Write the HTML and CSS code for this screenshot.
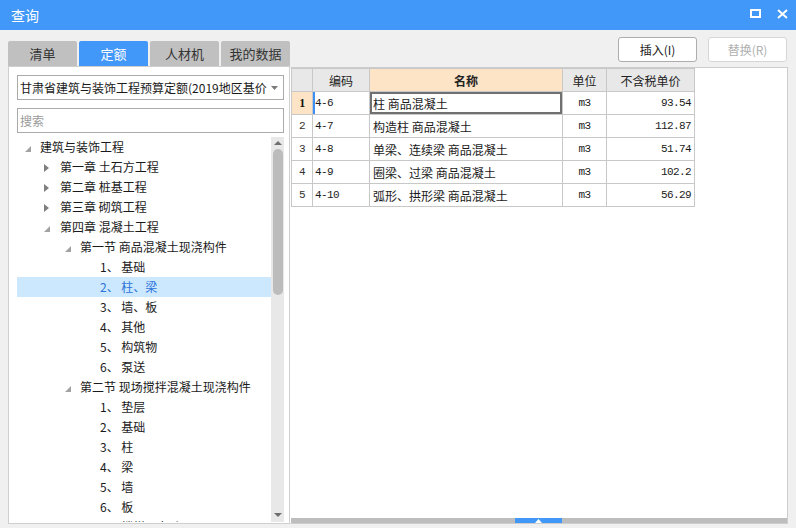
FILE: index.html
```html
<!DOCTYPE html>
<html lang="zh">
<head>
<meta charset="utf-8">
<title>查询</title>
<link rel="stylesheet" href="styles.css">
</head>
<body>
<div class="window">
  <header class="titlebar">
    <span class="title">查询</span>
    <div class="winbtns">
      <svg class="wb-max" width="12" height="10" viewBox="0 0 12 10"><rect x="1" y="1" width="9" height="7" fill="none" stroke="#fff" stroke-width="2"/></svg>
      <svg class="wb-close" width="11" height="10" viewBox="0 0 11 10"><path d="M1 1L10 9M10 1L1 9" stroke="#fff" stroke-width="2"/></svg>
    </div>
  </header>
  <div class="main">
    <section class="left">
      <nav class="tabs">
        <div class="tab">清单</div>
        <div class="tab active">定额</div>
        <div class="tab">人材机</div>
        <div class="tab">我的数据</div>
      </nav>
      <div class="lpanel">
        <div class="select">
          <span class="select-text">甘肃省建筑与装饰工程预算定额(2019地区基价)</span>
          <svg class="select-arrow" width="7" height="4" viewBox="0 0 7 4"><polygon points="0,0 7,0 3.5,4" fill="#7a7a7a"/></svg>
        </div>
        <div class="search">搜索</div>
        <div class="tree">
          <div class="tree-list">
            <div class="node l0"><span class="tg"><svg class="open" width="6" height="6" viewBox="0 0 6 6"><polygon points="6,0 6,6 0,6"/></svg></span><span>建筑与装饰工程</span></div>
            <div class="node l1"><span class="tg"><svg class="closed" width="5" height="8" viewBox="0 0 5 8"><polygon points="0,0 5,4 0,8"/></svg></span><span>第一章 土石方工程</span></div>
            <div class="node l1"><span class="tg"><svg class="closed" width="5" height="8" viewBox="0 0 5 8"><polygon points="0,0 5,4 0,8"/></svg></span><span>第二章 桩基工程</span></div>
            <div class="node l1"><span class="tg"><svg class="closed" width="5" height="8" viewBox="0 0 5 8"><polygon points="0,0 5,4 0,8"/></svg></span><span>第三章 砌筑工程</span></div>
            <div class="node l1"><span class="tg"><svg class="open" width="6" height="6" viewBox="0 0 6 6"><polygon points="6,0 6,6 0,6"/></svg></span><span>第四章 混凝土工程</span></div>
            <div class="node l2"><span class="tg"><svg class="open" width="6" height="6" viewBox="0 0 6 6"><polygon points="6,0 6,6 0,6"/></svg></span><span>第一节 商品混凝土现浇构件</span></div>
            <div class="node l3"><span class="tg"></span><span>1、 基础</span></div>
            <div class="node l3 selected"><span class="tg"></span><span>2、 柱、梁</span></div>
            <div class="node l3"><span class="tg"></span><span>3、 墙、板</span></div>
            <div class="node l3"><span class="tg"></span><span>4、 其他</span></div>
            <div class="node l3"><span class="tg"></span><span>5、 构筑物</span></div>
            <div class="node l3"><span class="tg"></span><span>6、 泵送</span></div>
            <div class="node l2"><span class="tg"><svg class="open" width="6" height="6" viewBox="0 0 6 6"><polygon points="6,0 6,6 0,6"/></svg></span><span>第二节 现场搅拌混凝土现浇构件</span></div>
            <div class="node l3"><span class="tg"></span><span>1、 垫层</span></div>
            <div class="node l3"><span class="tg"></span><span>2、 基础</span></div>
            <div class="node l3"><span class="tg"></span><span>3、 柱</span></div>
            <div class="node l3"><span class="tg"></span><span>4、 梁</span></div>
            <div class="node l3"><span class="tg"></span><span>5、 墙</span></div>
            <div class="node l3"><span class="tg"></span><span>6、 板</span></div>
            <div class="node l3"><span class="tg"></span><span>7、 楼梯、台阶</span></div>
          </div>
          <div class="vscroll">
            <div class="vs-btn"><svg width="8" height="4" viewBox="0 0 8 4"><polygon points="0,4 8,4 4,0" fill="#6e6e6e"/></svg></div>
            <div class="vs-thumb"></div>
            <div class="vs-fill"></div>
            <div class="vs-btn down"><svg width="8" height="4" viewBox="0 0 8 4"><polygon points="0,0 8,0 4,4" fill="#6e6e6e"/></svg></div>
          </div>
        </div>
      </div>
    </section>
    <section class="right">
      <div class="btnrow">
        <button class="btn">插入(I)</button>
        <button class="btn" disabled>替换(R)</button>
      </div>
      <div class="rpanel">
        <div class="grid-wrap">
          <table class="grid">
            <colgroup><col class="c-no"><col class="c-code"><col class="c-name"><col class="c-unit"><col class="c-price"></colgroup>
            <thead>
              <tr><th></th><th>编码</th><th class="hl">名称</th><th>单位</th><th>不含税单价</th></tr>
            </thead>
            <tbody>
              <tr class="cur"><td class="no">1</td><td class="code mark">4-6</td><td class="name focus">柱 商品混凝土</td><td class="unit">m3</td><td class="price">93.54</td></tr>
              <tr><td class="no">2</td><td class="code">4-7</td><td class="name">构造柱 商品混凝土</td><td class="unit">m3</td><td class="price">112.87</td></tr>
              <tr><td class="no">3</td><td class="code">4-8</td><td class="name">单梁、连续梁 商品混凝土</td><td class="unit">m3</td><td class="price">51.74</td></tr>
              <tr><td class="no">4</td><td class="code">4-9</td><td class="name">圈梁、过梁 商品混凝土</td><td class="unit">m3</td><td class="price">102.2</td></tr>
              <tr><td class="no">5</td><td class="code">4-10</td><td class="name">弧形、拱形梁 商品混凝土</td><td class="unit">m3</td><td class="price">56.29</td></tr>
            </tbody>
          </table>
        </div>
        <div class="hscroll"><div class="hs-thumb"><svg width="7" height="4" viewBox="0 0 7 4"><polygon points="0,4 7,4 3.5,0" fill="#fff"/></svg></div></div>
      </div>
    </section>
  </div>
</div>
</body>
</html>
```

FILE: styles.css
```css
* { box-sizing: border-box; }
html, body { margin: 0; padding: 0; }
body {
  width: 796px;
  height: 528px;
  overflow: hidden;
  background: #f0f0f0;
  font-family: "Noto Sans CJK SC", "Noto Sans", sans-serif;
  font-size: 12px;
  color: #1a1a1a;
}
.window { width: 796px; height: 528px; }

.titlebar {
  height: 30px;
  background: #4298f8;
  display: flex;
  align-items: center;
  justify-content: space-between;
  padding: 0 8px 0 11px;
}
.title { color: #fff; font-size: 14px; line-height: 30px; }
.winbtns { display: flex; align-items: center; gap: 15px; margin-top: -2px; }
.winbtns svg { display: block; }

.main { display: flex; padding: 0 8px; }

.left { width: 282px; padding-top: 11px; }
.tabs { display: flex; gap: 2px; height: 25px; }
.tab {
  width: 78px;
  height: 25px;
  background: #c0c0c0;
  color: #333;
  font-size: 13px;
  line-height: 25px;
  text-align: center;
  border-radius: 2px 2px 0 0;
}
.tab.active { background: #4298f8; color: #fff; }

.lpanel {
  height: 458px;
  background: #fff;
  border: 1px solid #cfcfcf;
  padding: 8px 5px 1px 8px;
  display: flex;
  flex-direction: column;
}
.select {
  height: 25px;
  border: 1px solid #ababab;
  display: flex;
  align-items: center;
  padding: 0 5px 0 2px;
  margin-bottom: 8px;
}
.select-text {
  flex: 1;
  overflow: hidden;
  white-space: nowrap;
  line-height: 23px;
  margin-right: 4px;
}
.select-arrow { display: block; flex: none; }
.search {
  height: 25px;
  border: 1px solid #ababab;
  color: #9a9a9a;
  line-height: 23px;
  padding-left: 2px;
  margin-bottom: 4px;
}
.tree { flex: 1; display: flex; overflow: hidden; }
.tree-list { flex: 1; overflow: hidden; }
.node {
  height: 20px;
  line-height: 20px;
  display: flex;
  white-space: nowrap;
}
.node.l0 { padding-left: 8px; }
.node.l1 { padding-left: 27px; }
.node.l2 { padding-left: 48px; }
.node.l3 { padding-left: 68px; }
.node.l1 .tg { width: 16px; }
.tg { width: 15px; flex: none; height: 20px; position: relative; }
.tg svg { display: block; }
.tg svg.open { fill: #a2a2a2; margin-top: 9px; }
.tg svg.closed { fill: #7f7f7f; margin-top: 7px; }
.node.selected { background: #cce8ff; color: #2b73d8; }

.vscroll {
  width: 13px;
  background: #e8e8e8;
  display: flex;
  flex-direction: column;
  align-items: center;
}
.vs-btn { height: 12px; display: flex; align-items: center; justify-content: center; width: 100%; }
.vs-btn svg { display: block; margin-top: -1px; }
.vs-btn.down { height: 14px; }
.vs-thumb {
  width: 10px;
  height: 146px;
  background: #bcbcbc;
  border-radius: 5px;
  margin-left: 1px;
}
.vs-fill { flex: 1; }

.right { width: 498px; padding-top: 7px; }
.btnrow {
  height: 25px;
  display: flex;
  justify-content: flex-end;
  gap: 11px;
  padding-right: 1px;
  margin-bottom: 5px;
}
.btn {
  width: 79px;
  height: 25px;
  background: #fff;
  border: 1px solid #adadad;
  border-radius: 3px;
  font-family: "Noto Sans CJK SC", "Noto Sans", sans-serif;
  font-size: 12px;
  color: #1a1a1a;
  padding: 0;
}
.btn:disabled { border-color: #d6d6d6; color: #b0b0b0; }

.rpanel {
  height: 457px;
  background: #fff;
  border: 1px solid #cdcdcd;
  border-left-color: #fff;
  display: flex;
  flex-direction: column;
}
.grid-wrap { flex: 1; overflow: hidden; }
.grid {
  border-collapse: collapse;
  table-layout: fixed;
  width: 403px;
}
.c-no { width: 21px; }
.c-code { width: 57px; }
.c-name { width: 193px; }
.c-unit { width: 44px; }
.c-price { width: 88px; }
.grid th, .grid td {
  border: 1px solid #c8c8c8;
  height: 23px;
  padding: 0;
  white-space: nowrap;
  overflow: hidden;
}
.grid tr { height: 23px; }
.grid th {
  background: #e8e8e8;
  font-weight: normal;
  text-align: center;
  color: #222;
}
.grid th.hl { background: #fde4c6; font-weight: bold; }
.grid td.no, .grid td.code, .grid td.unit, .grid td.price {
  font-family: "Liberation Mono", "DejaVu Sans Mono", monospace;
  font-size: 11px;
  letter-spacing: -0.6px;
}
.grid td.no { text-align: center; color: #333; }
.grid tr.cur td.no { background: #fde4c6; font-weight: bold; font-family: "Liberation Serif", serif; font-size: 12px; color: #111; }
.grid td.code { padding-left: 2px; }
.grid td.code.mark { box-shadow: inset 2px 0 0 #3d8ef5; }
.grid td.name { padding-left: 3px; }
.grid td.name.focus { box-shadow: inset 0 0 0 2px #707070; }
.grid td.unit { text-align: center; }
.grid td.price { text-align: right; padding-right: 3px; }

.hscroll {
  height: 5px;
  background: #bdbdbd;
  flex: none;
  display: flex;
}
.hs-thumb {
  margin-left: 224px;
  width: 47px;
  height: 5px;
  background: #4298f8;
  display: flex;
  align-items: center;
  justify-content: center;
}
.hs-thumb svg { display: block; }
```
